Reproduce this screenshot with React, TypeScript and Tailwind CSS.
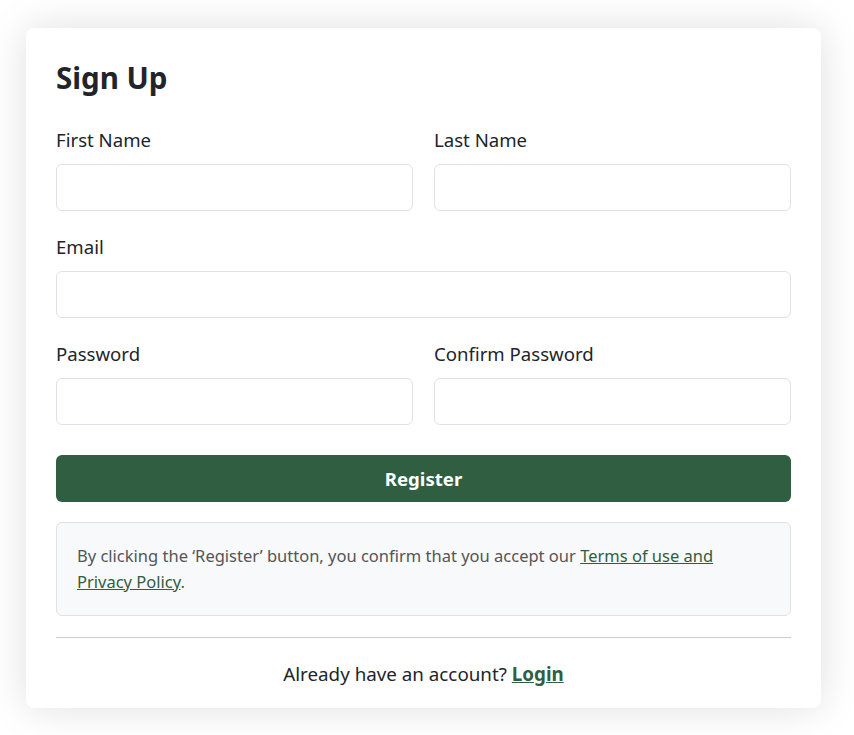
import React from "react";

function Field({ label }: { label: string }) {
  return (
    <div className="flex flex-col flex-1">
      <label className="text-[18.6px] leading-[24px] text-[#212529] mb-[12px]">{label}</label>
      <div className="h-[47px] rounded-[6px] border border-[#dee2e6] bg-white" />
    </div>
  );
}

export default function App() {
  return (
    <div
      className="min-h-[735px] bg-white pl-[26px] pt-[28px]"
      style={{ fontFamily: '"Noto Sans", "Open Sans", sans-serif' }}
    >
      <div className="w-[795px] rounded-[8px] bg-white px-[30px] pt-[30px] pb-[19px] shadow-[0_0_40px_rgba(0,0,0,0.13)]">
        <h1 className="text-[29.5px] leading-[40px] font-bold text-[#212529] mb-[30px]">Sign Up</h1>
        <div className="flex gap-[21px] mb-[24px]">
          <Field label="First Name" />
          <Field label="Last Name" />
        </div>
        <div className="flex mb-[24px]">
          <Field label="Email" />
        </div>
        <div className="flex gap-[21px] mb-[30px]">
          <Field label="Password" />
          <Field label="Confirm Password" />
        </div>
        <button className="w-full h-[47px] rounded-[6px] bg-[#2f5e41] text-white font-bold text-[18.6px]">
          Register
        </button>
        <div className="mt-[20px] rounded-[6px] border border-[#dee2e6] bg-[#f8f9fa] px-[20px] py-[20px] text-[16.5px] leading-[26px] text-[#555]">
          By clicking the ‘Register’ button, you confirm that you accept our{" "}
          <a className="text-[#2f5e41] underline" href="#">Terms of use and Privacy Policy</a>.
        </div>
        <hr className="mt-[21px] border-t border-[#ccc]" />
        <p className="mt-[21px] text-center text-[18.8px] leading-[30px] text-[#212529]">
          Already have an account?{" "}
          <a className="font-bold text-[#2f5e41] underline" href="#">Login</a>
        </p>
      </div>
    </div>
  );
}
